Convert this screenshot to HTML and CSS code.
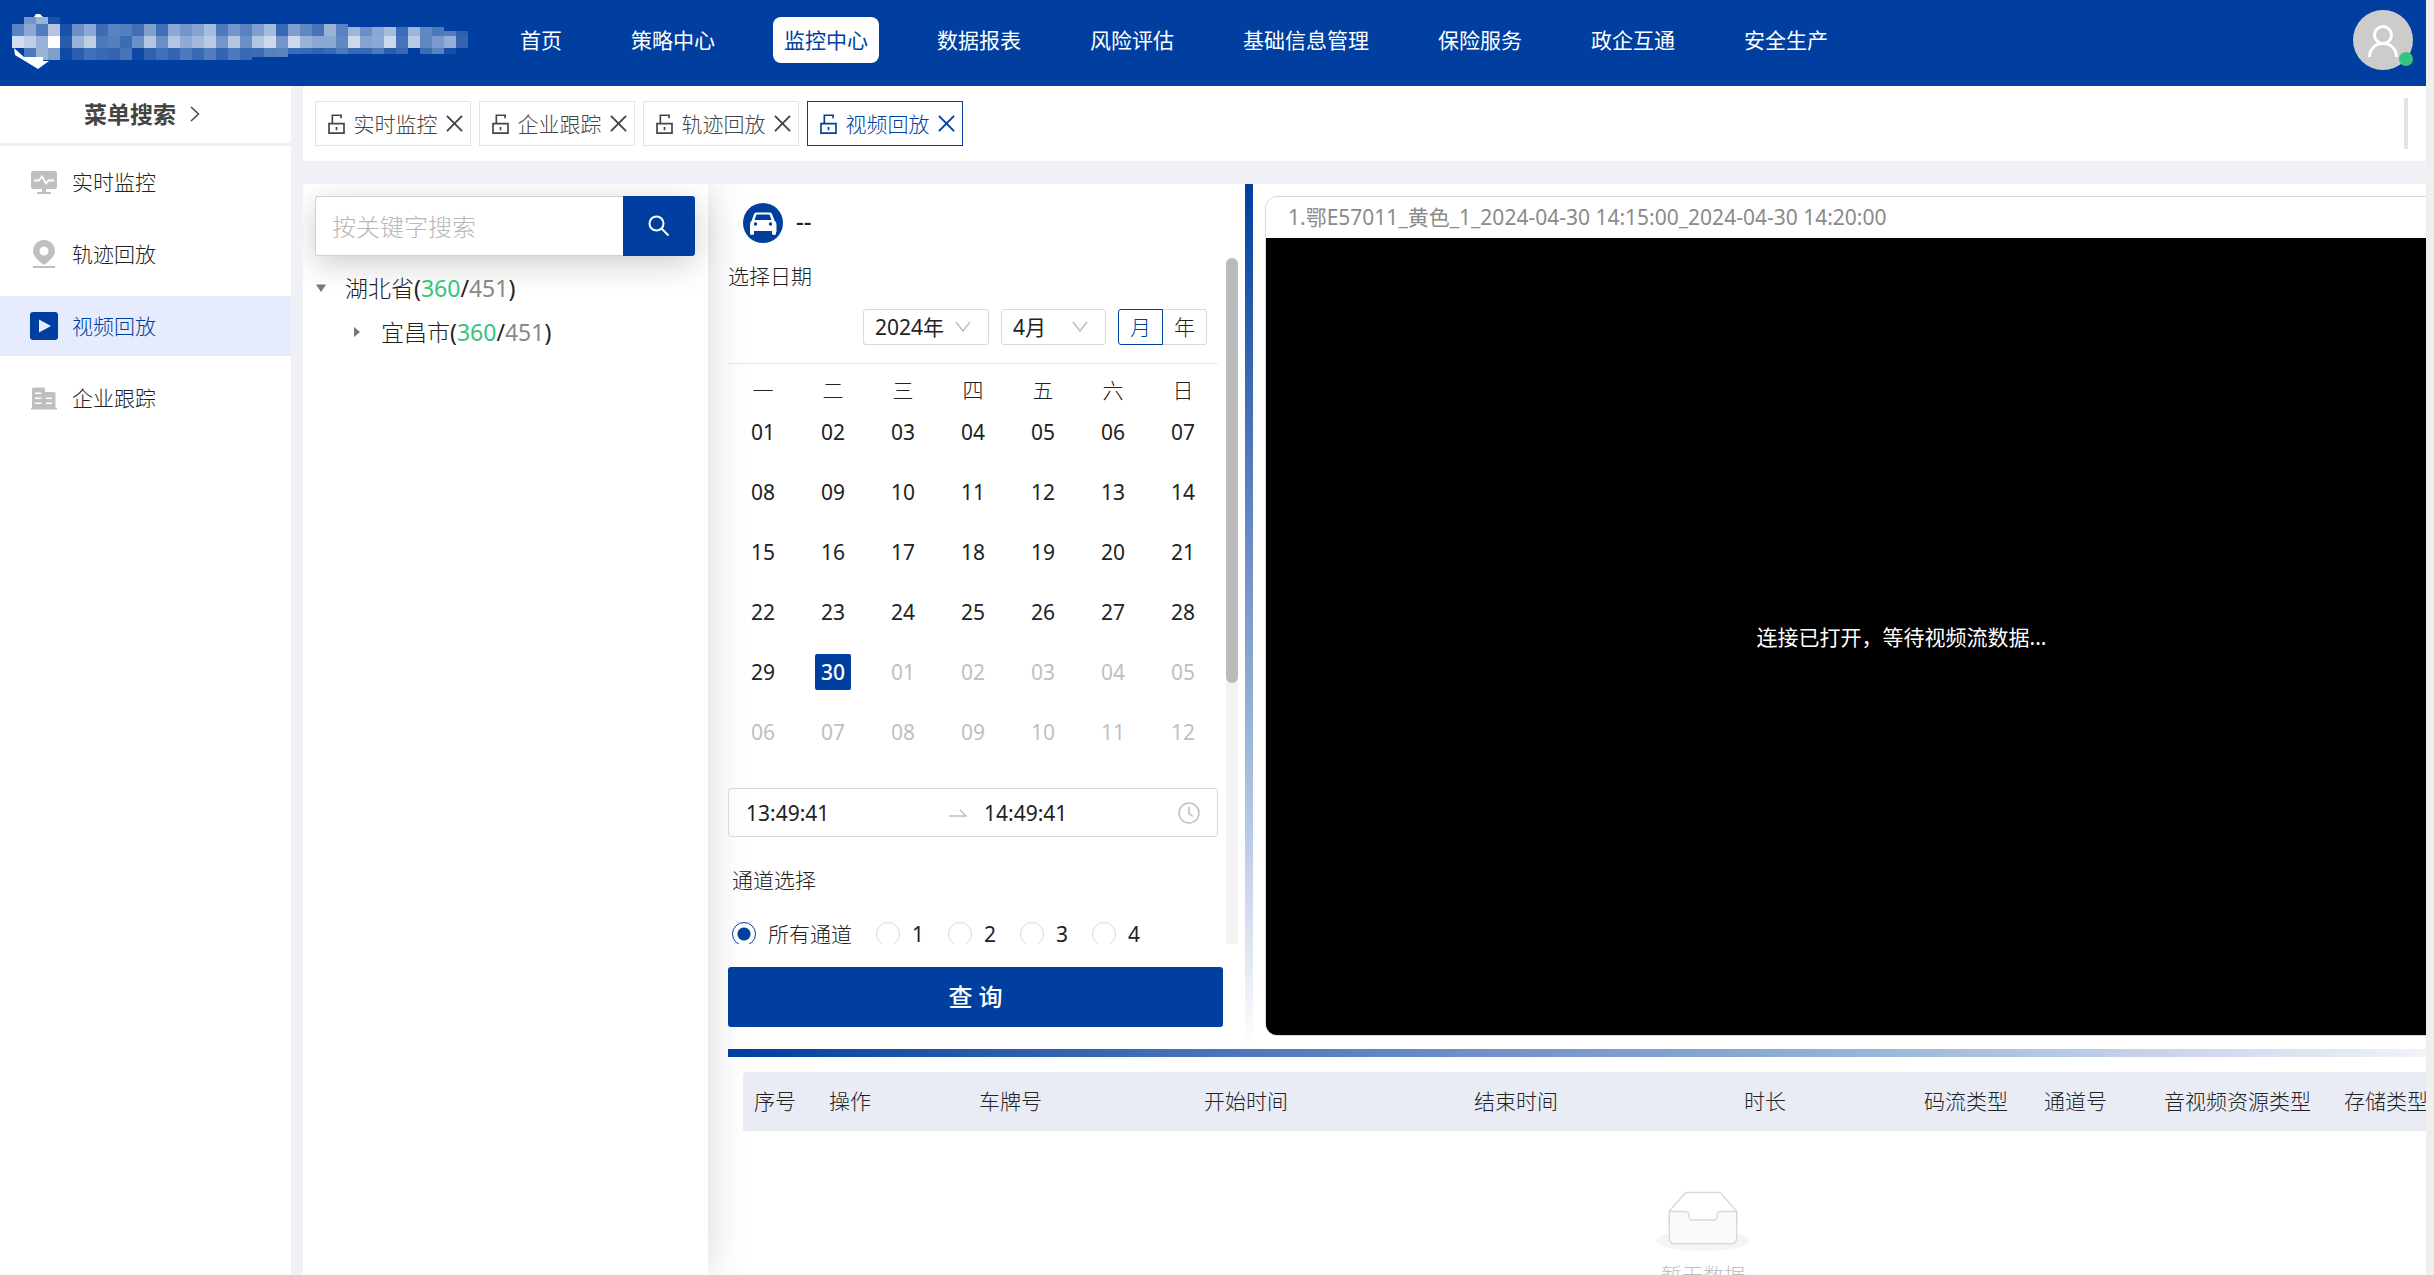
FILE: index.html
```html
<!DOCTYPE html>
<html lang="zh-CN">
<head>
<meta charset="utf-8">
<title>视频回放</title>
<link rel="stylesheet" href="styles.css">
</head>
<body>
<svg class="defs" aria-hidden="true">
  <symbol id="lock" viewBox="0 0 20 24"><path d="M1 11.500h18V23H1zM5 11V1.500h10.500V5M10 15.500v4" fill="none" stroke="currentColor" stroke-width="2"/></symbol>
  <symbol id="close" viewBox="0 0 18 18"><path d="M1 1l16 16M17 1L1 17" fill="none" stroke="currentColor" stroke-width="2"/></symbol>
  <symbol id="down" viewBox="0 0 16 12"><path d="M1 1l7 9 7-9" fill="none" stroke="currentColor" stroke-width="1.500"/></symbol>
</svg>
<div class="app">
  <header class="header">
    <svg class="logo" id="logo" viewBox="0 0 509 86" role="img" aria-label="logo">
      <path d="M34 17l2-3h4l3 3zM14 48l10 9h19v4h6l-11 8-23-14z" fill="#fff"/>
    </svg>
    <nav class="nav">
      <a href="#">首页</a>
      <a href="#">策略中心</a>
      <a href="#" class="active">监控中心</a>
      <a href="#">数据报表</a>
      <a href="#">风险评估</a>
      <a href="#">基础信息管理</a>
      <a href="#">保险服务</a>
      <a href="#">政企互通</a>
      <a href="#">安全生产</a>
    </nav>
    <button class="avatar" aria-label="用户">
      <svg viewBox="0 0 60 60"><circle cx="30" cy="30" r="30" fill="#ccc"/><g fill="none" stroke="#fff" stroke-width="3"><circle cx="30" cy="25" r="8.500"/><path d="M16.500 47c0-8 6-13.500 13.500-13.500S43.500 39 43.500 47"/></g></svg>
      <span class="online"></span>
    </button>
  </header>

  <div class="body">
    <aside class="sidebar">
      <div class="menu-title">菜单搜索
        <svg width="10" height="16" viewBox="0 0 10 16"><path d="M1 1l7.500 7L1 15" fill="none" stroke="#444" stroke-width="1.500"/></svg>
      </div>
      <nav class="menu">
        <a href="#"><svg width="28" height="28" viewBox="0 0 28 28"><path d="M3 3h22q2 0 2 2v14q0 2-2 2h-9v3h5v2H7v-2h5v-3H3q-2 0-2-2V5q0-2 2-2z" fill="#bfbfbf"/><path d="M4 12.500h5l3-4 4 7 2.500-3H24" fill="none" stroke="#fff" stroke-width="1.800"/></svg>实时监控</a>
        <a href="#"><svg width="28" height="28" viewBox="0 0 28 28"><path d="M14 0a11 11 0 0 1 11 11c0 6-7 11-11 14C10 22 3 17 3 11A11 11 0 0 1 14 0zm0 6.500a4.500 4.500 0 1 0 0 9 4.500 4.500 0 0 0 0-9zM3 26h22v2H3z" fill="#bfbfbf" fill-rule="evenodd"/></svg>轨迹回放</a>
        <a href="#" class="active"><svg width="28" height="28" viewBox="0 0 28 28"><rect x="0" y="0" width="28" height="28" rx="3" fill="#003f9f"/><path d="M9 7.500v13l12-6.500z" fill="#e6ecfe"/></svg>视频回放</a>
        <a href="#"><svg width="28" height="28" viewBox="0 0 28 28"><path d="M2 24V5q0-1.500 1.500-1.500h10Q15 3.500 15 5v3h9q1.500 0 1.500 1.500V24H27v1.500H1V24zM5 8.500V10h6.500V8.500zm0 5V15h6.500v-1.500zm0 5V20h6.500v-1.500zm11 -5V15h6v-1.500zm0 5V20h6v-1.500z" fill="#bfbfbf" fill-rule="evenodd"/></svg>企业跟踪</a>
      </nav>
    </aside>

    <main class="main">
      <div class="tabs">
        <div class="tab"><svg class="i-lock"><use href="#lock"/></svg><a href="#">实时监控</a><button aria-label="关闭"><svg class="i-close"><use href="#close"/></svg></button></div>
        <div class="tab"><svg class="i-lock"><use href="#lock"/></svg><a href="#">企业跟踪</a><button aria-label="关闭"><svg class="i-close"><use href="#close"/></svg></button></div>
        <div class="tab"><svg class="i-lock"><use href="#lock"/></svg><a href="#">轨迹回放</a><button aria-label="关闭"><svg class="i-close"><use href="#close"/></svg></button></div>
        <div class="tab active"><svg class="i-lock"><use href="#lock"/></svg><a href="#">视频回放</a><button aria-label="关闭"><svg class="i-close"><use href="#close"/></svg></button></div>
        <span class="tabs-end"></span>
      </div>

      <div class="workspace">
        <section class="tree-panel">
          <form class="search">
            <input type="text" placeholder="按关键字搜索" aria-label="按关键字搜索">
            <button type="button" aria-label="搜索"><svg width="24" height="24" viewBox="0 0 24 24"><circle cx="9.500" cy="9.500" r="7" fill="none" stroke="#fff" stroke-width="2"/><path d="M14.500 14.500l7 7" stroke="#fff" stroke-width="2"/></svg></button>
          </form>
          <ul class="tree">
            <li><svg width="12" height="12" viewBox="0 0 12 12"><path d="M1 2.500h10L6 10z" fill="#777"/></svg><span>湖北省<em>(<b>360</b>/<i>451</i>)</em></span></li>
            <li class="child"><svg width="12" height="12" viewBox="0 0 12 12"><path d="M3 1v10l6-5z" fill="#777"/></svg><span>宜昌市<em>(<b>360</b>/<i>451</i>)</em></span></li>
          </ul>
        </section>

        <div class="content">
          <div class="upper">
            <section class="query">
              <div class="vehicle">
                <svg width="40" height="40" viewBox="0 0 40 40"><circle cx="20" cy="20" r="20" fill="#003f9f"/><path d="M13 9.500h14q1.500 0 2 1.500l2.500 6.500q2 1.500 2 4v7q0 .5-.5.500v1.500q0 1.500-2 1.500t-2-1.500V28H11v2.500Q11 32 9 32t-2-1.500V21.500q0-2.500 1.800-4L11 11q.5-1.500 2-1.500z" fill="#fff"/><path d="M13.500 11.500h13l2 5.500h-17z" fill="#003f9f"/><circle cx="12.500" cy="21" r="1.700" fill="#003f9f"/><circle cx="27.500" cy="21" r="1.700" fill="#003f9f"/></svg>
                <span>--</span>
              </div>
              <div class="scroll">
                <div class="scroll-body">
                  <h3 class="label">选择日期</h3>
                  <div class="cal-tools">
                    <label class="select year"><select aria-label="年份"><option>2024年</option></select><svg><use href="#down"/></svg></label>
                    <label class="select month"><select aria-label="月份"><option>4月</option></select><svg><use href="#down"/></svg></label>
                    <div class="mode"><button class="on">月</button><button>年</button></div>
                  </div>
                  <table class="calendar">
                    <thead><tr><th>一</th><th>二</th><th>三</th><th>四</th><th>五</th><th>六</th><th>日</th></tr></thead>
                    <tbody>
                      <tr><td>01</td><td>02</td><td>03</td><td>04</td><td>05</td><td>06</td><td>07</td></tr>
                      <tr><td>08</td><td>09</td><td>10</td><td>11</td><td>12</td><td>13</td><td>14</td></tr>
                      <tr><td>15</td><td>16</td><td>17</td><td>18</td><td>19</td><td>20</td><td>21</td></tr>
                      <tr><td>22</td><td>23</td><td>24</td><td>25</td><td>26</td><td>27</td><td>28</td></tr>
                      <tr><td>29</td><td><span class="today">30</span></td><td class="off">01</td><td class="off">02</td><td class="off">03</td><td class="off">04</td><td class="off">05</td></tr>
                      <tr><td class="off">06</td><td class="off">07</td><td class="off">08</td><td class="off">09</td><td class="off">10</td><td class="off">11</td><td class="off">12</td></tr>
                    </tbody>
                  </table>
                  <div class="range">
                    <input type="text" value="13:49:41" aria-label="开始时间">
                    <svg width="18" height="10" viewBox="0 0 18 10"><path d="M0 8h17l-6-6" fill="none" stroke="#bfbfbf" stroke-width="1.500"/></svg>
                    <input type="text" value="14:49:41" aria-label="结束时间">
                    <svg width="22" height="22" viewBox="0 0 22 22"><g fill="none" stroke="#bfbfbf" stroke-width="1.500"><circle cx="11" cy="11" r="10"/><path d="M11 5v6.500l4 3"/></g></svg>
                  </div>
                  <h3 class="label channel-label">通道选择</h3>
                  <div class="channels">
                    <label class="all"><input type="radio" name="channel" checked>所有通道</label>
                    <label><input type="radio" name="channel">1</label>
                    <label><input type="radio" name="channel">2</label>
                    <label><input type="radio" name="channel">3</label>
                    <label><input type="radio" name="channel">4</label>
                  </div>
                </div>
                <div class="track"><div class="thumb"></div></div>
              </div>
              <button class="submit">查 询</button>
            </section>
            <div class="divider-v"></div>
            <section class="player">
              <div class="player-title">1.鄂E57011_黄色_1_2024-04-30 14:15:00_2024-04-30 14:20:00</div>
              <div class="screen">连接已打开，等待视频流数据...</div>
            </section>
          </div>
          <div class="divider-h"></div>
          <section class="records">
            <table>
              <colgroup><col class="w75"><col class="w150"><col class="w225"><col class="w270"><col class="w270"><col class="w180"><col class="w120"><col class="w120"><col class="w180"><col class="w330"></colgroup>
              <thead><tr><th>序号</th><th>操作</th><th>车牌号</th><th>开始时间</th><th>结束时间</th><th>时长</th><th>码流类型</th><th>通道号</th><th>音视频资源类型</th><th>存储类型</th></tr></thead>
              <tbody><tr><td colspan="10">
                <svg width="94" height="60" viewBox="0 0 64 41"><g transform="translate(0 1)" fill="none"><ellipse fill="#f5f5f5" cx="32" cy="33" rx="32" ry="7"/><g stroke="#d9d9d9"><path d="M55 12.760L44.854 1.258C44.367.474 43.656 0 42.907 0H21.093c-.749 0-1.460.474-1.947 1.257L9 12.761V22h46v-9.240z" fill="#fff"/><path d="M41.613 15.931c0-1.605.994-2.930 2.227-2.931H55v18.137C55 33.260 53.680 35 52.050 35h-40.100C10.320 35 9 33.259 9 31.137V13h11.160c1.233 0 2.227 1.323 2.227 2.928v.022c0 1.605 1.005 2.901 2.237 2.901h14.752c1.232 0 2.237-1.308 2.237-2.913v-.007z" fill="#fafafa"/></g></g></svg>
                <p>暂无数据</p>
              </td></tr></tbody>
            </table>
          </section>
        </div>
      </div>
    </main>
  </div>
</div>
<script src="logo.js"></script>
</body>
</html>
```
FILE: logo.js
```js
// Opacity (percent) of each 12px mosaic cell, left to right from x = 12.
const rows = [
  { y: 17, h: 7, cells: [0, 45, 60, 10] },
  { y: 24, h: 12, cells: [35, 55, 32, 70, 10, 42, 55, 24, 35, 33, 25, 50, 25, 55, 45, 52, 65, 30, 45, 35, 50, 65, 22, 50, 38, 28, 60, 35] },
  { y: 27, h: 9, x: 348, cells: [62, 42, 54, 65, 24, 62, 38, 30] },
  { y: 31, h: 5, x: 444, cells: [32, 18] },
  { y: 36, h: 12, cells: [82, 75, 60, 100, 15, 60, 75, 30, 33, 24, 42, 70, 42, 70, 56, 63, 72, 45, 70, 42, 70, 80, 45, 80, 60, 55, 55, 38, 80, 52, 55, 80, 28, 72, 38, 48, 58, 20] },
  { y: 48, h: 12, cells: [0, 30, 60, 50, 6, 16, 26, 22, 20, 28, 5, 18, 26, 20, 30, 22, 32, 20, 30, 22] },
  { y: 48, h: 9, x: 252, cells: [24, 34, 35] },
  { y: 48, h: 6, x: 288, cells: [24, 22, 18, 22, 30, 22, 22, 30, 16, 22, 0, 24, 35, 8] },
];
const logo = document.getElementById("logo");
for (const { y, h, x = 12, cells } of rows) {
  cells.forEach((opacity, i) => {
    const cell = document.createElementNS("http://www.w3.org/2000/svg", "rect");
    cell.setAttribute("x", x + i * 12);
    cell.setAttribute("y", y);
    cell.setAttribute("width", 12);
    cell.setAttribute("height", h);
    cell.setAttribute("fill", `rgba(255,255,255,${opacity / 100})`);
    logo.append(cell);
  });
}
```
FILE: styles.css
```css
* { box-sizing: border-box; }
body {
  margin: 0;
  padding-right: 8px;
  height: 100vh;
  overflow: hidden;
  background: #efefef;
  color: #222;
  font: 300 21px/24px "Noto Sans", "Noto Sans CJK SC", sans-serif;
}
a { color: inherit; text-decoration: none; }
button, input, select { font: inherit; color: inherit; margin: 0; padding: 0; border: 0; background: none; outline: 0; border-radius: 0; }
svg { display: block; flex: none; }
h3, p, ul { margin: 0; padding: 0; font: inherit; list-style: none; }
.defs { display: none; }

.app { height: 100vh; overflow: hidden; display: flex; flex-direction: column; background: #f0f1f6; }

.header { flex: none; height: 86px; padding-right: 13px; display: flex; background: #003f9f; }
.logo { width: 509px; height: 86px; }
.nav { flex: 1; display: flex; align-items: flex-start; gap: 47px; padding-top: 17px; color: #fff; font-weight: 400; }
.nav a { padding: 0 11px; line-height: 46px; border-radius: 8px; white-space: nowrap; }
.nav .active { background: #fff; color: #003f9f; }
.avatar { position: relative; width: 60px; height: 60px; margin-top: 10px; }
.online { position: absolute; right: 0; bottom: 4px; width: 14px; height: 14px; border-radius: 50%; background: #35c480; }

.body { flex: 1; min-height: 0; display: flex; gap: 12px; }
.sidebar { flex: none; width: 291px; background: #fff; }
.menu-title { height: 60px; padding: 0 0 1px 84px; display: flex; align-items: center; gap: 14px; border-bottom: 3px solid #f0f0f2; font-size: 23px; font-weight: 700; color: #444; }
.menu { display: flex; flex-direction: column; gap: 12px; padding-top: 6px; }
.menu a { height: 60px; padding-left: 30px; display: flex; align-items: center; gap: 14px; }
.menu .active { background: #e6ecfe; color: #003f9f; }

.main { flex: 1; min-width: 0; display: flex; flex-direction: column; gap: 23px; }
.tabs { flex: none; height: 75px; padding: 0 18px 0 12px; display: flex; align-items: center; gap: 8px; background: #fff; }
.tab { width: 156px; height: 45px; padding: 0 7px 0 12px; display: flex; align-items: center; justify-content: space-between; border: 1px solid #e3e3e3; color: #444; white-space: nowrap; }
.tab.active { border-color: #003f9f; color: #003f9f; }
.i-lock { width: 17px; height: 20px; }
.i-close { width: 17px; height: 17px; }
.tabs-end { width: 4px; height: 51px; margin-left: auto; background: #e3e3e3; }

.workspace { flex: 1; min-height: 0; display: flex; background: #fff; overflow: hidden; }
.tree-panel { flex: none; width: 405px; padding: 12px 13px 12px 12px; background: #fff; box-shadow: 0 0 40px rgba(0, 0, 0, .16); }
.search { display: flex; height: 60px; box-shadow: 0 8px 32px rgba(0, 0, 0, .2); border-radius: 3px; }
.search input { flex: 1; min-width: 0; padding: 0 16px; border: 1px solid #d0d0d0; border-right: 0; border-radius: 3px 0 0 3px; font-size: 24px; background: #fff; }
.search input::placeholder { color: #b8b8b8; opacity: 1; }
.search button { width: 72px; display: grid; place-items: center; background: #003f9f; border-radius: 0 3px 3px 0; }
.tree { padding-top: 10px; font-size: 23px; }
.tree li { height: 44px; display: flex; align-items: center; gap: 18px; }
.tree .child { padding-left: 36px; }
.tree em { font-style: normal; font-weight: 400; }
.tree b { font-weight: 400; color: #35c480; }
.tree i { font-style: normal; color: #888; }

.content { flex: 1; min-width: 0; padding-left: 20px; }
.upper { display: flex; }
.query { flex: none; width: 517px; padding-bottom: 22px; }
.vehicle { height: 74px; padding: 4px 0 0 15px; display: flex; align-items: center; gap: 13px; font-size: 24px; font-weight: 500; }
.vehicle span { padding-bottom: 4px; }
.scroll { height: 686px; overflow: hidden; display: flex; justify-content: space-between; padding-right: 7px; }
.scroll-body { width: 490px; }
.track { width: 12px; height: 686px; background: #f3f3f3; border-radius: 6px 6px 0 0; }
.thumb { height: 62%; background: #bbb; border-radius: 6px; }
.label { line-height: 36px; }
.cal-tools { display: flex; justify-content: flex-end; gap: 12px; padding: 15px 11px 18px 0; border-bottom: 1px solid #e8e8e8; }
.select { display: grid; align-items: center; height: 36px; }
.select select, .select svg { grid-area: 1 / 1; }
.select select { height: 36px; padding-left: 11px; appearance: none; border: 1px solid #d9d9d9; border-radius: 3px; font-weight: 400; }
.select svg { justify-self: end; width: 16px; height: 12px; margin-right: 18px; color: #bfbfbf; pointer-events: none; }
.year { width: 126px; }
.month { width: 105px; }
.mode { display: flex; }
.mode button { width: 44px; height: 36px; border: 1px solid #d9d9d9; border-left: 0; border-radius: 0 3px 3px 0; }
.mode .on { width: 45px; border: 1px solid #003f9f; border-radius: 3px 0 0 3px; color: #003f9f; }
.calendar { width: 100%; table-layout: fixed; border-collapse: collapse; text-align: center; }
.calendar th { padding: 14px 0 0; font-weight: inherit; }
.calendar td { height: 60px; padding: 0; font-weight: 400; }
.calendar .off { color: #bfbfbf; }
.today { display: inline-block; width: 36px; line-height: 36px; border-radius: 2px; background: #003f9f; color: #fff; font-weight: 500; }
.range { margin-top: 26px; height: 49px; padding: 0 17px; display: flex; align-items: center; border: 1px solid #d9d9d9; border-radius: 3px; font-weight: 400; }
.range input { width: 203px; }
.range input + svg { margin-right: 17px; }
.range input:last-of-type { width: 194px; }
.range svg:last-child { margin-right: 0; }
.channel-label { padding: 25px 0 0 4px; }
.channels { display: flex; gap: 24px; padding: 24px 0 0 4px; font-weight: 400; }
.channels label { display: flex; align-items: center; gap: 12px; }
.channels .all { font-weight: 300; }
.channels input { appearance: none; width: 24px; height: 24px; border: 1px solid #d9d9d9; border-radius: 50%; background: #fff; }
.channels input:checked { border-color: #003f9f; background: radial-gradient(circle, #003f9f 6px, #fff 7px); }
.submit { display: block; width: 495px; height: 60px; margin-top: 23px; border-radius: 3px; background: #003f9f; color: #fff; font-size: 24px; font-weight: 500; }
.divider-v { flex: none; width: 8px; background: linear-gradient(#003f9f, #7090c8 44%, #8aadd4 58%, #bccbe6 76%, #fff); }
.player { flex: 1; min-width: 0; margin: 12px -112px 13px 12px; display: flex; flex-direction: column; border: 1px solid #d9d9d9; border-radius: 12px; overflow: hidden; }
.player-title { height: 41px; padding-left: 22px; line-height: 41px; color: #8a8a8a; white-space: nowrap; font-weight: 400; }
.screen { flex: 1; display: grid; place-items: center; background: #000; color: #fff; font-weight: 400; }
.divider-h { height: 8px; background: linear-gradient(90deg, #003f9f, #7090c8 44%, #8aadd4 62%, #bccbe6 80%, #f0f3f9); }
.records { padding: 15px 0 0 15px; }
.records table { width: 1920px; table-layout: fixed; border-collapse: collapse; }
.records th { height: 58px; padding: 0 0 0 11px; background: #e9ecf5; border-bottom: 1px solid #ebebef; text-align: left; font-weight: inherit; white-space: nowrap; }
.records th:first-child { border-radius: 4px 0 0 0; }
.records td { padding: 60px 0 40px; color: #bfbfbf; text-align: center; }
.records td svg { margin: 0 auto 12px; }
.w75 { width: 75px; }
.w120 { width: 120px; }
.w150 { width: 150px; }
.w180 { width: 180px; }
.w225 { width: 225px; }
.w270 { width: 270px; }
.w330 { width: 330px; }
```
